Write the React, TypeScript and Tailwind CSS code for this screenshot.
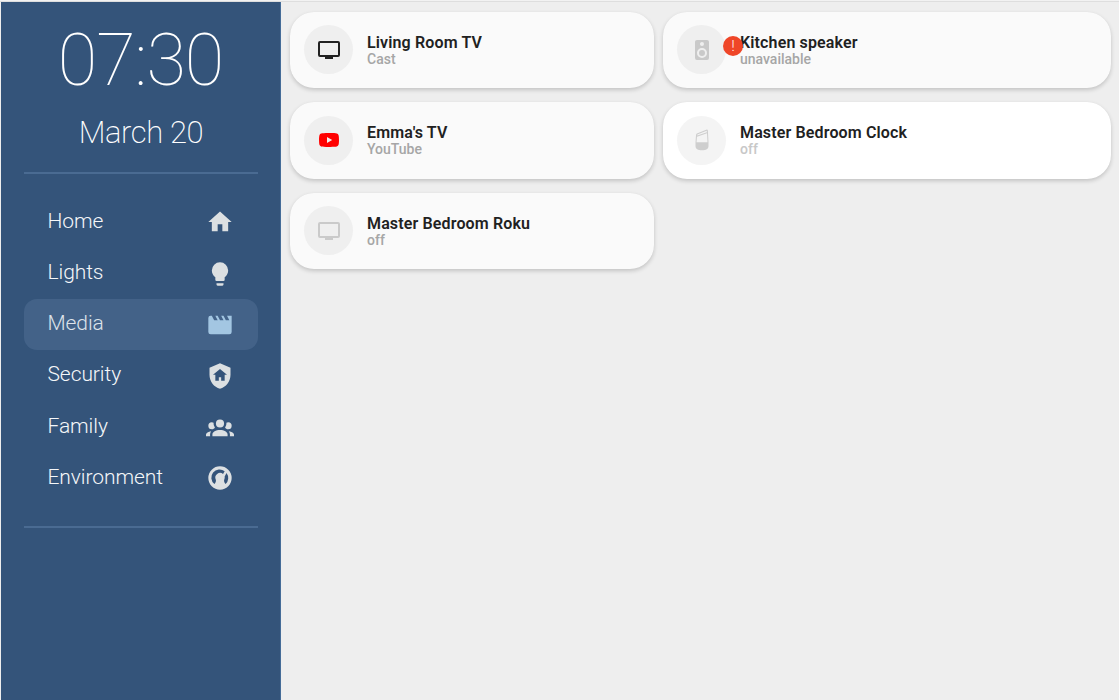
import React from "react";

const paths = {
  home: "M10,20V14H14V20H19V12H22L12,3L2,12H5V20H10Z",
  bulb: "M12,2A7,7 0 0,0 5,9C5,11.38 6.19,13.47 8,14.74V17A1,1 0 0,0 9,18H15A1,1 0 0,0 16,17V14.74C17.81,13.47 19,11.38 19,9A7,7 0 0,0 12,2M9,21A1,1 0 0,0 10,22H14A1,1 0 0,0 15,21V20H9V21Z",
  movie: "M18,4L20,8H17L15,4H13L15,8H12L10,4H8L10,8H7L5,4H4A2,2 0 0,0 2,6V18A2,2 0 0,0 4,20H20A2,2 0 0,0 22,18V4H18Z",
  shield: "M11,13H13V16H16V11H18L12,6L6,11H8V16H11V13M12,1L21,5V11C21,16.55 17.16,21.74 12,23C6.84,21.74 3,16.55 3,11V5L12,1Z",
  group: "M12,5.5A3.5,3.5 0 0,1 15.5,9A3.5,3.5 0 0,1 12,12.5A3.5,3.5 0 0,1 8.5,9A3.5,3.5 0 0,1 12,5.5M5,8C5.56,8 6.08,8.15 6.53,8.42C6.38,9.85 6.8,11.27 7.66,12.38C7.16,13.34 6.16,14 5,14A3,3 0 0,1 2,11A3,3 0 0,1 5,8M19,8A3,3 0 0,1 22,11A3,3 0 0,1 19,14C17.84,14 16.84,13.34 16.34,12.38C17.2,11.27 17.62,9.85 17.47,8.42C17.92,8.15 18.44,8 19,8M5.5,18.25C5.5,16.18 8.41,14.5 12,14.5C15.59,14.5 18.5,16.18 18.5,18.25V20H5.5V18.25M0,20V18.5C0,17.11 1.89,15.94 4.45,15.6C3.86,16.28 3.5,17.22 3.5,18.25V20H0M24,20H20.5V18.25C20.5,17.22 20.14,16.28 19.55,15.6C22.11,15.94 24,17.11 24,18.5V20Z",
  gauge: "M12,2A10,10 0 1,0 12,22A10,10 0 1,0 12,2M7.2,17.2A7,7 0 0,1 16,6.2L14.6,8.5A4.1,4.1 0 0,0 8.4,13.5C8.8,14.7 8.3,15.8 7.2,17.2M17.6,7.8A7,7 0 0,1 16.8,17.2C15.7,15.8 15.2,14.7 15.6,13.5A4.1,4.1 0 0,0 16,10.8Z",
  tv: "M21,17H3V5H21M21,3H3A2,2 0 0,0 1,5V17A2,2 0 0,0 3,19H8V21H16V19H21A2,2 0 0,0 23,17V5A2,2 0 0,0 21,3Z",
  speaker: "M12,12A3,3 0 0,0 9,15A3,3 0 0,0 12,18A3,3 0 0,0 15,15A3,3 0 0,0 12,12M12,20A5,5 0 0,1 7,15A5,5 0 0,1 12,10A5,5 0 0,1 17,15A5,5 0 0,1 12,20M12,4A2,2 0 0,1 14,6A2,2 0 0,1 12,8C10.89,8 10,7.1 10,6C10,4.89 10.89,4 12,4M17,2H7C5.89,2 5,2.89 5,4V20A2,2 0 0,0 7,22H17A2,2 0 0,0 19,20V4C19,2.89 18.1,2 17,2Z",
  youtube: "M10,15L15.19,12L10,9V15M21.56,7.17C21.69,7.64 21.78,8.27 21.84,9.07C21.91,9.87 21.94,10.56 21.94,11.16L22,12C22,14.19 21.84,15.8 21.56,16.83C21.31,17.73 20.73,18.31 19.83,18.56C19.36,18.69 18.5,18.78 17.18,18.84C15.88,18.91 14.69,18.94 13.59,18.94L12,19C7.81,19 5.2,18.84 4.17,18.56C3.27,18.31 2.69,17.73 2.44,16.83C2.31,16.36 2.22,15.73 2.16,14.93C2.09,14.13 2.06,13.44 2.06,12.84L2,12C2,9.81 2.16,8.2 2.44,7.17C2.69,6.27 3.27,5.69 4.17,5.44C4.64,5.31 5.5,5.22 6.82,5.16C8.12,5.09 9.31,5.06 10.41,5.06L12,5C16.19,5 18.8,5.16 19.83,5.44C20.73,5.69 21.31,6.27 21.56,7.17Z",
  assistant: "M5.5,14.2H18.5V18C18.5,21 16,22.3 12,22.3C8,22.3 5.5,21 5.5,18Z M6.9,5.5L16.2,1.7Q17.8,1.2 17.9,2.8L18.5,14.2H17.5L17,5.2L7,8.7L6.5,14.2H5.5L6,7.2Q6.1,5.9 6.9,5.5M7.2,7.6L16.9,4.2L16.7,2.7L7.4,6.4Z",
};
type IconName = keyof typeof paths;

function Icon({ name, className }: { name: IconName; className: string }) {
  return (
    <svg viewBox="0 0 24 24" className={`shrink-0 ${className}`} fill="currentColor" fillRule="evenodd">
      <path d={paths[name]} />
    </svg>
  );
}

const nav: { label: string; icon: IconName }[] = [
  { label: "Home", icon: "home" },
  { label: "Lights", icon: "bulb" },
  { label: "Media", icon: "movie" },
  { label: "Security", icon: "shield" },
  { label: "Family", icon: "group" },
  { label: "Environment", icon: "gauge" },
];

function Sidebar() {
  return (
    <aside className="ml-px w-[280px] shrink-0 border-r border-[#456c98] bg-[#34547a] pr-[22px] pl-[23px] text-white">
      <div className="flex h-[170px] flex-col items-center">
        <div className="mt-[17px] -ml-px h-[84px] text-[72px] leading-[84px] font-[120] tracking-[-1px]">07:30</div>
        <div className="mt-[12px] h-[38px] text-[31px] leading-[36px] font-extralight tracking-[-0.4px]">March 20</div>
      </div>
      <hr className="h-[2px] border-0 bg-[#4a6b92]" />
      <nav className="mt-[22.5px] flex flex-col">
        {nav.map(({ label, icon }) => {
          const active = label === "Media";
          return (
            <a
              key={label}
              className={`flex h-[51.2px] items-center justify-between rounded-[13px] pr-[24px] pl-[23.5px] ${active ? "bg-[#436288]" : ""}`}
            >
              <span className={`-mt-[1.5px] text-[21px] leading-[25px] font-[360] tracking-[-0.08px] ${active ? "text-[#dde3ea]" : "text-[#f5f7f9]"}`}>{label}</span>
              <Icon name={icon} className={`mt-[0.5px] size-[28px] ${active ? "text-[#a3c6e2]" : "text-[#dce0e2]"}`} />
            </a>
          );
        })}
      </nav>
      <hr className="mt-[22.5px] h-[2px] border-0 bg-[#4a6b92]" />
    </aside>
  );
}

interface CardProps {
  title: string;
  state: string;
  icon: IconName;
  iconClass: string;
  stateClass?: string;
  white?: boolean;
  alert?: boolean;
}

function Card({ title, state, icon, iconClass, stateClass = "text-[#a6a6a6]", white, alert }: CardProps) {
  return (
    <article
      className={`flex h-[76.5px] items-center rounded-[24px] pl-[14px] shadow-[0_2px_4px_rgba(0,0,0,0.18),0_0_1px_rgba(0,0,0,0.04)] ${white ? "bg-white" : "bg-[#fafafa]"}`}
    >
      <div className={`relative flex size-[49px] shrink-0 items-center justify-center rounded-full ${white ? "bg-[#f4f4f4]" : "bg-[#efefef]"}`}>
        <Icon name={icon} className={iconClass} />
        {alert && (
          <span className="absolute top-[11px] left-[46px] flex size-[20px] items-center justify-center rounded-full bg-[#ef4628] text-[14px] leading-none font-light text-white">
            !
          </span>
        )}
      </div>
      <div className="mt-[1px] ml-[14px] flex flex-col">
        <span className="h-[17.3px] text-[16px] leading-[18px] font-semibold tracking-[0.14px] text-[#212121]">{title}</span>
        <span className={`h-[16px] text-[14px] leading-[16px] font-medium ${stateClass}`}>{state}</span>
      </div>
    </article>
  );
}

export default function App() {
  return (
    <div className="flex h-[700px] w-[1119px] flex-col overflow-hidden bg-[#eeeeee] font-[Roboto,sans-serif]">
      <div className="h-[2px] shrink-0 border-b border-[#dedede] bg-[#f2f2f2]" />
      <div className="flex min-h-0 flex-1">
        <Sidebar />
        <main className="grid grid-cols-[363.5px_447.5px] content-start gap-x-[9.5px] gap-y-[14px] pt-[9.6px] pl-[9px]">
          <Card title="Living Room TV" state="Cast" icon="tv" iconClass="size-[24px] text-[#212121]" />
          <Card title="Kitchen speaker" state="unavailable" icon="speaker" iconClass="size-[24px] text-[#c9c9c9]" alert />
          <Card title="Emma's TV" state="YouTube" icon="youtube" iconClass="size-[24px] text-[#ff0000]" />
          <Card title="Master Bedroom Clock" state="off" icon="assistant" iconClass="size-[24px] text-[#cecece]" stateClass="text-[#c8c8c8]" white />
          <Card title="Master Bedroom Roku" state="off" icon="tv" iconClass="size-[24px] text-[#cacaca]" />
        </main>
      </div>
    </div>
  );
}
